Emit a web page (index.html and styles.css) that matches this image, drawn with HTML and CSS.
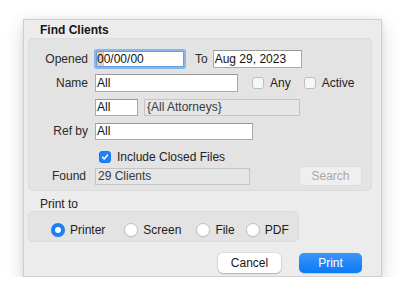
FILE: index.html
```html
<!DOCTYPE html>
<html>
<head>
<meta charset="utf-8">
<link rel="stylesheet" href="styles.css">
</head>
<body>
<div class="window">
  <div class="title">Find Clients</div>
  <div class="group">
    <div class="row">
      <span class="label">Opened</span>
      <div class="field field-focus w-opened"><span class="sel">0</span>0/00/00</div>
      <span class="to">To</span>
      <div class="field w-to">Aug 29, 2023</div>
    </div>
    <div class="row">
      <span class="label">Name</span>
      <div class="field w-name">All</div>
      <span class="check check-any"></span><span class="ctext">Any</span>
      <span class="check check-active"></span><span class="ctext">Active</span>
    </div>
    <div class="row">
      <span class="label"></span>
      <div class="field w-all">All</div>
      <div class="field disabled w-att">{All Attorneys}</div>
    </div>
    <div class="row">
      <span class="label">Ref by</span>
      <div class="field w-ref">All</div>
    </div>
    <div class="row row-include">
      <span class="label"></span>
      <span class="check checked"><svg viewBox="0 0 12 12" width="12" height="12"><path d="M3 6.2 L5.1 8.4 L9 3.6" fill="none" stroke="#fff" stroke-width="1.8" stroke-linecap="round" stroke-linejoin="round"/></svg></span>
      <span class="ctext">Include Closed Files</span>
    </div>
    <div class="row row-found">
      <span class="label">Found</span>
      <div class="field disabled w-found">29 Clients</div>
      <div class="btn btn-disabled btn-search">Search</div>
    </div>
  </div>
  <div class="subtitle">Print to</div>
  <div class="group2">
    <label class="radio-item"><span class="radio on"></span><span>Printer</span></label>
    <label class="radio-item"><span class="radio"></span><span>Screen</span></label>
    <label class="radio-item"><span class="radio"></span><span>File</span></label>
    <label class="radio-item"><span class="radio"></span><span>PDF</span></label>
  </div>
  <div class="buttons">
    <div class="btn btn-cancel">Cancel</div>
    <div class="btn btn-print">Print</div>
  </div>
</div>
</body>
</html>
```

FILE: styles.css
```css
html, body {
  margin: 0;
  padding: 0;
  background: #ffffff;
}
body {
  font-family: "Liberation Sans", Arial, sans-serif;
  font-size: 12px;
  color: #1a1a1a;
}
.window {
  box-sizing: border-box;
  margin: 19px 0 0 23px;
  width: 359px;
  height: 258px;
  background: #ececec;
  border: 1px solid #cfcfcf;
  box-shadow: 0 6px 18px rgba(0, 0, 0, 0.16), 0 0 6px rgba(0, 0, 0, 0.06);
  padding: 3px 0 0 0;
}
.title {
  font-weight: bold;
  line-height: 15px;
  height: 15px;
  padding-left: 16px;
  color: #151515;
}
.group {
  box-sizing: border-box;
  margin-left: 4px;
  width: 344px;
  height: 153px;
  background: #e3e3e3;
  border: 1px solid #dcdcdc;
  border-radius: 5px;
  padding-top: 11px;
}
.row {
  display: flex;
  align-items: center;
  height: 18px;
  margin-top: 6px;
}
.row:first-child {
  margin-top: 0;
}
.row-include {
  margin-top: 8px;
}
.row-found {
  margin-top: 0;
  height: 20px;
}
.label {
  width: 59px;
  margin-right: 7px;
  text-align: right;
  color: #2a2a2a;
  flex: none;
}
.row-found .label {
  width: 57px;
  margin-right: 9px;
}
.field {
  box-sizing: border-box;
  height: 18px;
  line-height: 16px;
  border: 1px solid #a9a9a9;
  border-top-color: #9a9a9a;
  background: #ffffff;
  padding-left: 1px;
  color: #111;
  white-space: nowrap;
  overflow: hidden;
  flex: none;
}
.field-focus {
  height: 16px;
  line-height: 14px;
  margin-left: 1px;
  border: 1px solid #5f9de6;
  box-shadow: 0 0 0 2px rgba(110, 165, 238, 0.75);
  border-radius: 1px;
  padding-left: 0;
}
.sel {
  background: #f6c9a3;
}
.disabled {
  background: #e6e6e6;
  border-color: #c4c4c4;
  color: #3a3a3a;
  padding-left: 2px;
}
.w-opened { width: 88px; }
.w-to { width: 89px; }
.w-name { width: 143px; }
.w-all { width: 43px; }
.w-att { width: 156px; margin-left: 6px; height: 17px; line-height: 15px; }
.w-all { height: 17px; line-height: 15px; }
.w-ref { width: 158px; height: 17px; line-height: 15px; }
.w-found { width: 155px; height: 17px; line-height: 15px; }
.to {
  margin-left: 11px;
  margin-right: 5px;
  color: #2a2a2a;
}
.check {
  box-sizing: border-box;
  display: inline-flex;
  align-items: center;
  justify-content: center;
  width: 12px;
  height: 12px;
  border: 1px solid #bdbdbd;
  border-radius: 3px;
  background: #f7f7f7;
  flex: none;
}
.check-any {
  margin-left: 14px;
}
.check-active {
  margin-left: 13px;
}
.checked {
  margin-left: 4px;
  background: #1c82fa;
  border-color: #1a78e8;
}
.checked svg {
  display: block;
}
.ctext {
  margin-left: 6px;
  color: #222;
}
.btn {
  box-sizing: border-box;
  width: 63px;
  height: 20px;
  line-height: 20px;
  text-align: center;
  border-radius: 5px;
  flex: none;
}
.btn-disabled {
  background: #efefef;
  border: 1px solid #dedede;
  line-height: 18px;
  color: #a8a8a8;
}
.btn-search {
  margin-left: 49px;
}
.subtitle {
  margin-top: 6px;
  line-height: 14px;
  height: 14px;
  padding-left: 16px;
  color: #222;
}
.group2 {
  box-sizing: border-box;
  display: flex;
  align-items: center;
  margin-left: 4px;
  width: 271px;
  height: 31px;
  background: #e3e3e3;
  border: 1px solid #dcdcdc;
  border-radius: 5px;
  padding: 11px 0 4px 22px;
}
.radio-item {
  display: flex;
  align-items: center;
  gap: 5px;
  height: 14px;
  color: #1c1c1c;
}
.radio-item:nth-child(2) { margin-left: 19px; }
.radio-item:nth-child(3) { margin-left: 15px; }
.radio-item:nth-child(4) { margin-left: 11px; }
.radio {
  box-sizing: border-box;
  width: 14px;
  height: 14px;
  border-radius: 50%;
  background: #ffffff;
  border: 1px solid #c2c2c2;
  box-shadow: 0 0.5px 1px rgba(0, 0, 0, 0.08);
  flex: none;
}
.radio.on {
  background: #ffffff;
  border: 4.5px solid #1a80fa;
}
.buttons {
  display: flex;
  justify-content: flex-end;
  gap: 18px;
  margin-top: 11px;
  padding-right: 19px;
}
.btn-cancel {
  background: #ffffff;
  color: #1a1a1a;
  box-shadow: 0 0 0 0.5px rgba(0, 0, 0, 0.12), 0 1px 1.5px rgba(0, 0, 0, 0.2);
}
.btn-print {
  background: linear-gradient(#3d95fb, #0a7af5);
  color: #ffffff;
  box-shadow: 0 0.5px 1px rgba(0, 0, 0, 0.15);
}
```
